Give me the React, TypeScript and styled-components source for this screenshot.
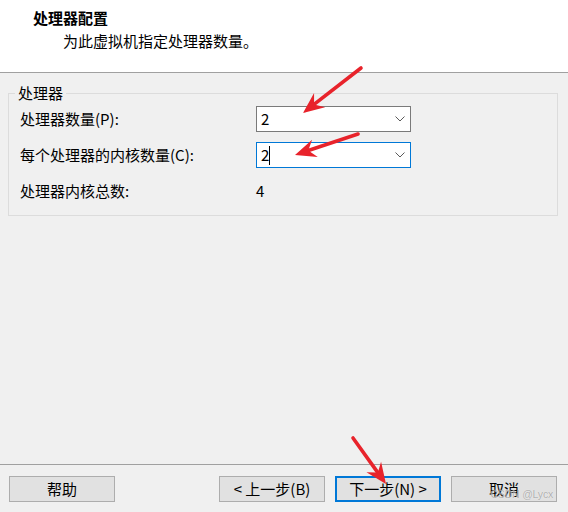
import React from "react";
import styled, { createGlobalStyle } from "styled-components";

const Global = createGlobalStyle`
  html, body { margin: 0; padding: 0; }
  body { background: #f0f0f0; }
`;

const FONT = `"Noto Sans CJK SC", "Microsoft YaHei", sans-serif`;

const Window = styled.div`
  position: relative;
  width: 568px;
  height: 512px;
  background: #f0f0f0;
  display: flex;
  flex-direction: column;
  font-family: ${FONT};
  font-size: 15px;
  color: #000;
  overflow: hidden;
`;

const Header = styled.header`
  box-sizing: border-box;
  background: #ffffff;
  border-bottom: 1px solid #a0a0a0;
  height: 73px;
  padding: 8px 0 0 33px;
  display: flex;
  flex-direction: column;
`;

const Title = styled.div`
  font-weight: 700;
  line-height: 20px;
`;

const Subtitle = styled.div`
  margin-top: 3px;
  padding-left: 30px;
  line-height: 20px;
`;

const Main = styled.main`
  flex: 1;
  display: flex;
  flex-direction: column;
  padding-top: 11px;
`;

const Group = styled.fieldset`
  margin: 0 10px 0 8px;
  padding: 4px 12px 11px 11px;
  border: 1px solid #dcdcdc;
  min-inline-size: 0;
`;

const Legend = styled.legend`
  margin-left: -5px;
  padding: 0 3px;
  line-height: 18px;
`;

const Rows = styled.div`
  display: grid;
  grid-template-columns: 236px 155px;
  row-gap: 10px;
  align-items: center;
`;

const Label = styled.div`
  line-height: 26px;
`;

const Value = styled.div`
  line-height: 26px;
`;

const Combo = styled.div<{ $focused?: boolean }>`
  box-sizing: border-box;
  height: 26px;
  background: #ffffff;
  border: 1px solid ${(p) => (p.$focused ? "#0078d7" : "#7a7a7a")};
  display: flex;
  align-items: center;
  padding: 0 5px 0 4px;
  line-height: 24px;
`;

const ComboText = styled.span`
  flex: 1;
  display: flex;
  align-items: center;
`;

const Caret = styled.span`
  display: inline-block;
  width: 1px;
  height: 19px;
  background: #000;
`;

const Footer = styled.footer`
  border-top: 1px solid #a0a0a0;
  padding: 11px 11px 10px 9px;
  display: flex;
  align-items: center;
`;

const Spacer = styled.div`
  flex: 1;
`;

const ButtonGroup = styled.div`
  display: flex;
  gap: 10px;
`;

const Button = styled.button<{ $default?: boolean }>`
  box-sizing: border-box;
  width: 106px;
  height: 26px;
  margin: 0;
  padding: 0;
  background: #e1e1e1;
  border: ${(p) => (p.$default ? "2px solid #0078d7" : "1px solid #adadad")};
  font-family: ${FONT};
  font-size: 15px;
  line-height: 22px;
  color: #000;
  display: flex;
  align-items: center;
  justify-content: center;
`;

const Watermark = styled.div`
  position: absolute;
  right: 15px;
  bottom: 12px;
  font-family: "Liberation Sans", Arial, sans-serif;
  font-size: 10.5px;
  line-height: 12px;
  color: rgba(120, 120, 120, 0.55);
  text-shadow: 0 0 1px rgba(255, 255, 255, 0.8);
  letter-spacing: -0.2px;
`;

const Overlay = styled.svg`
  position: absolute;
  left: 0;
  top: 0;
  pointer-events: none;
`;

function Chevron() {
  return (
    <svg width="10" height="6" viewBox="0 0 10 6">
      <polyline points="0.5,0.5 5,5 9.5,0.5" fill="none" stroke="#5a5a5a" strokeWidth="1" />
    </svg>
  );
}

type Pt = [number, number];

function Arrow({ from, to }: { from: Pt; to: Pt }) {
  const dx = to[0] - from[0];
  const dy = to[1] - from[1];
  const len = Math.hypot(dx, dy);
  const ux = dx / len;
  const uy = dy / len;
  const px = -uy;
  const py = ux;
  const headLen = 21;
  const notch = 14;
  const half = 9;
  const bx = to[0] - ux * headLen;
  const by = to[1] - uy * headLen;
  const nx = to[0] - ux * notch;
  const ny = to[1] - uy * notch;
  const pts = [
    `${to[0]},${to[1]}`,
    `${bx + px * half},${by + py * half}`,
    `${nx},${ny}`,
    `${bx - px * half},${by - py * half}`,
  ].join(" ");
  return (
    <g>
      <line
        x1={from[0]}
        y1={from[1]}
        x2={nx}
        y2={ny}
        stroke="#e8232b"
        strokeWidth="3.6"
        strokeLinecap="round"
      />
      <polygon points={pts} fill="#e8232b" />
    </g>
  );
}

export default function App() {
  return (
    <>
      <Global />
      <Window>
        <Header>
          <Title>处理器配置</Title>
          <Subtitle>为此虚拟机指定处理器数量。</Subtitle>
        </Header>
        <Main>
          <Group>
            <Legend>处理器</Legend>
            <Rows>
              <Label>处理器数量(P):</Label>
              <Combo>
                <ComboText>2</ComboText>
                <Chevron />
              </Combo>
              <Label>每个处理器的内核数量(C):</Label>
              <Combo $focused>
                <ComboText>
                  2<Caret />
                </ComboText>
                <Chevron />
              </Combo>
              <Label>处理器内核总数:</Label>
              <Value>4</Value>
            </Rows>
          </Group>
        </Main>
        <Footer>
          <Button>帮助</Button>
          <Spacer />
          <ButtonGroup>
            <Button>&lt; 上一步(B)</Button>
            <Button $default>下一步(N) &gt;</Button>
            <Button>取消</Button>
          </ButtonGroup>
        </Footer>
        <Watermark>CSDN @Lycx</Watermark>
        <Overlay width="568" height="512" viewBox="0 0 568 512">
          <Arrow from={[361, 68]} to={[303, 113]} />
          <Arrow from={[358, 134]} to={[295, 155]} />
          <Arrow from={[353, 438]} to={[386, 484]} />
        </Overlay>
      </Window>
    </>
  );
}
